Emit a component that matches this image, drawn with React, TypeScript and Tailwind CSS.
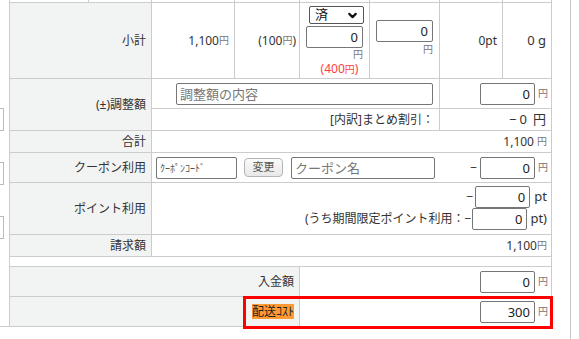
import { ChevronDown } from 'lucide-react';

const line = 'border-[#cccccc]';

function Yen({ big = false }: { big?: boolean }) {
  return (
    <span className={big ? 'ml-[6px] text-[13px] text-[#333]' : 'ml-[3px] text-[10px] text-[#7d7373]'}>円</span>
  );
}

function NumBox({ value, w = 'w-[55px]' }: { value: string; w?: string }) {
  return (
    <input
      readOnly
      value={value}
      className={`${w} h-[22px] rounded-[2px] border border-[#767676] bg-white pr-[4px] text-right text-[13px] text-[#222] outline-none`}
    />
  );
}

function Label({ children, w = 'w-[142px]' }: { children: React.ReactNode; w?: string }) {
  return (
    <div className={`${w} flex shrink-0 items-center justify-end border-r ${line} bg-[#f2f3f3] pr-[5px]`}>
      {children}
    </div>
  );
}

export default function App() {
  return (
    <div className="relative flex h-[339px] w-[579px] overflow-hidden bg-white text-[12px] text-[#333] font-['Noto_Sans','Noto_Sans_CJK_JP',sans-serif]">
      {/* cut-off column on the left */}
      <div className={`flex h-[327px] w-[9px] shrink-0 flex-col gap-[31px] border-b ${line} pt-[108px]`}>
        <div className="h-[23px] w-[4px] border border-l-0 border-[#bbbbbb]" />
        <div className="h-[23px] w-[4px] border border-l-0 border-[#bbbbbb]" />
        <div className="h-[23px] w-[4px] border border-l-0 border-[#bbbbbb]" />
      </div>

      <div className={`flex h-[327px] w-[543px] shrink-0 flex-col border-l border-r ${line}`}>
        {/* end of previous row */}
        <div className={`flex h-[3px] border-b ${line}`}>
          <div className={`w-[79px] border-r ${line}`} />
          <div className={`w-[63px] border-r ${line}`} />
          <div className={`w-[83px] border-r ${line}`} />
          <div className={`w-[65px] border-r ${line}`} />
          <div className={`w-[70px] border-r ${line}`} />
          <div className={`w-[70px] border-r ${line}`} />
          <div className={`w-[63px] border-r ${line}`} />
          <div className="flex-1" />
        </div>

        {/* 小計 */}
        <div className={`flex h-[76px] border-b ${line}`}>
          <Label>小計</Label>
          <div className={`flex w-[83px] items-center justify-end border-r ${line} pr-[5px]`}>
            1,100<span className="text-[10px] text-[#7d7373]">円</span>
          </div>
          <div className={`flex w-[65px] items-center justify-end border-r ${line} pr-[3px]`}>
            (100<span className="text-[10px] text-[#7d7373]">円</span>)
          </div>
          <div className={`flex w-[70px] flex-col items-center justify-center border-r ${line} pt-[1px]`}>
            <div className="ml-[4px] flex h-[18px] w-[55px] items-center justify-between rounded-[2px] border border-[#555] pl-[5px] pr-[4px] text-[13px] text-[#111]">
              <span>済</span>
              <ChevronDown size={13} strokeWidth={4} className="text-[#111]" />
            </div>
            <div className="mt-[2px] flex w-[57px] flex-col items-end">
              <NumBox value="0" w="w-[57px]" />
              <span className="mt-[1px] text-[10px] leading-[11px] text-[#7d7373]">円</span>
            </div>
            <div className="ml-[10px] mt-[2px] text-[12px] leading-[13px] text-[#ff4040]">
              (400<span className="text-[10px]">円</span>)
            </div>
          </div>
          <div className={`flex w-[70px] items-center justify-center border-r ${line} pb-[6px]`}>
            <div className="flex w-[57px] flex-col items-end">
              <NumBox value="0" w="w-[57px]" />
              <span className="mt-[2px] text-[10px] leading-[11px] text-[#7d7373]">円</span>
            </div>
          </div>
          <div className={`flex w-[63px] items-center justify-end border-r ${line} pr-[5px]`}>0pt</div>
          <div className="flex flex-1 items-center justify-end pr-[5px] text-[13px]">0 g</div>
        </div>

        {/* 調整額 */}
        <div className={`flex h-[52px] border-b ${line}`}>
          <Label>(±)調整額</Label>
          <div className="flex flex-1 flex-col">
            <div className={`flex h-[30px] border-b ${line}`}>
              <div className={`flex w-[288px] items-center justify-end border-r ${line} pr-[6px]`}>
                <input
                  readOnly
                  placeholder="調整額の内容"
                  className="h-[22px] w-[257px] rounded-[2px] border border-[#767676] px-[3px] text-[13px] outline-none placeholder:text-[#777]"
                />
              </div>
              <div className="flex flex-1 items-center justify-end pr-[3px]">
                <NumBox value="0" />
                <Yen />
              </div>
            </div>
            <div className="flex flex-1">
              <div className={`flex w-[288px] items-center justify-end border-r ${line} pr-[5px]`}>[内訳]まとめ割引：</div>
              <div className="flex flex-1 items-center justify-end pr-[5px] text-[13px]">
                <span className="mr-[3px]">−</span>0<Yen big />
              </div>
            </div>
          </div>
        </div>

        {/* 合計 */}
        <div className={`flex h-[22px] border-b ${line}`}>
          <Label>合計</Label>
          <div className="flex flex-1 items-center justify-end pr-[4px]">
            1,100<Yen />
          </div>
        </div>

        {/* クーポン利用 */}
        <div className={`flex h-[30px] border-b ${line}`}>
          <Label>クーポン利用</Label>
          <div className="flex flex-1 items-center pl-[4px] pr-[3px]">
            <input
              readOnly
              placeholder="ｸｰﾎﾟﾝｺｰﾄﾞ"
              className="h-[22px] w-[81px] rounded-[2px] border border-[#767676] px-[3px] text-[10px] outline-none placeholder:text-[#555]"
            />
            <button className="ml-[7px] h-[19px] w-[39px] rounded-[4px] border border-[#b5b5b5] bg-gradient-to-b from-[#fafafa] to-[#e8e8e8] text-[11px] text-[#555]">
              変更
            </button>
            <input
              readOnly
              placeholder="クーポン名"
              className="ml-[8px] h-[22px] w-[144px] rounded-[2px] border border-[#767676] px-[3px] text-[13px] outline-none placeholder:text-[#777]"
            />
            <span className="ml-auto mr-[3px]">−</span>
            <NumBox value="0" />
            <Yen />
          </div>
        </div>

        {/* ポイント利用 */}
        <div className={`flex h-[52px] border-b ${line}`}>
          <Label>ポイント利用</Label>
          <div className="flex flex-1 flex-col items-end justify-center pr-[4px] pb-[1px]">
            <div className="flex items-center">
              <span className="mr-[2px]">−</span>
              <NumBox value="0" />
              <span className="ml-[4px] text-[13px]">pt</span>
            </div>
            <div className="flex items-center">
              <span className="mr-[1px]">(うち期間限定ポイント利用：−</span>
              <NumBox value="0" />
              <span className="ml-[3px] text-[13px]">pt)</span>
            </div>
          </div>
        </div>

        {/* 請求額 */}
        <div className={`flex h-[22px] border-b ${line}`}>
          <Label>請求額</Label>
          <div className="flex flex-1 items-center justify-end pr-[4px]">
            1,100<span className="text-[10px] text-[#7d7373]">円</span>
          </div>
        </div>

        <div className={`h-[10px] border-b ${line}`} />

        {/* 入金額 */}
        <div className={`flex h-[30px] border-b ${line}`}>
          <Label w="w-[290px]">入金額</Label>
          <div className="flex flex-1 items-center justify-end pr-[3px]">
            <NumBox value="0" />
            <Yen />
          </div>
        </div>

        {/* 配送コスト */}
        <div className={`flex h-[30px] border-b ${line}`}>
          <Label w="w-[290px]">
            <span className="bg-[#ff9933] leading-[15px] text-[#222]">配送ｺｽﾄ</span>
          </Label>
          <div className="flex flex-1 items-center justify-end pr-[3px]">
            <NumBox value="300" />
            <Yen />
          </div>
        </div>
      </div>

      <div className="w-[18px] shrink-0" />
      <div className="h-full w-px shrink-0 bg-[#c8c8c8]" />

      {/* highlight box */}
      <div className="absolute left-[243px] top-[296px] h-[33px] w-[310px] border-[3px] border-[#ff0000]" />
    </div>
  );
}
